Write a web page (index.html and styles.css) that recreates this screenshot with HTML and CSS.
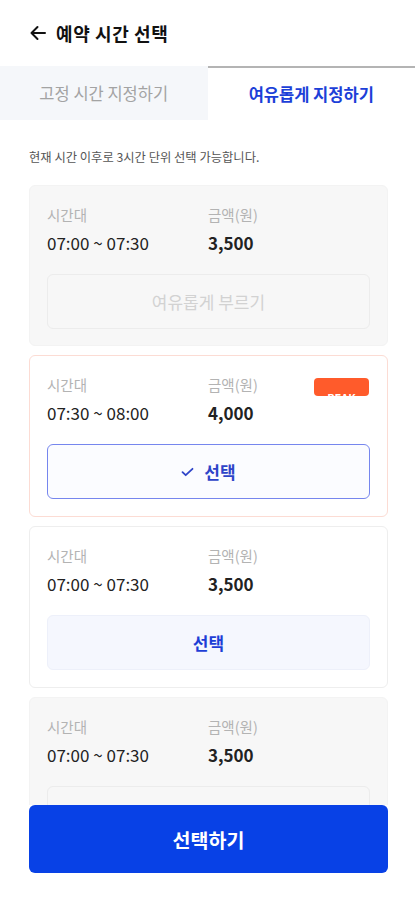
FILE: index.html
```html
<html>
  <head>
    <meta charset="utf-8">
    <link rel="stylesheet" href="styles.css">
    <title>예약 시간 선택</title>
  </head>
  <body>
    <div class="page">
      <header class="topbar">
        <svg class="back" width="18" height="18" viewBox="0 0 18 18">
          <path d="M16 9H2.5M8.5 3L2.5 9l6 6" fill="none" stroke="#111" stroke-width="2" stroke-linecap="round" stroke-linejoin="round"/>
        </svg>
        <h1>예약 시간 선택</h1>
      </header>

      <nav class="tabs">
        <div class="tab">고정 시간 지정하기</div>
        <div class="tab active">여유롭게 지정하기</div>
      </nav>

      <div class="list">
        <p class="notice">현재 시간 이후로 3시간 단위 선택 가능합니다.</p>

        <div class="slot disabled">
          <div class="row">
            <div class="col time">
              <span class="label">시간대</span>
              <span class="value">07:00 ~ 07:30</span>
            </div>
            <div class="col">
              <span class="label">금액(원)</span>
              <span class="value price">3,500</span>
            </div>
          </div>
          <button class="pick off">여유롭게 부르기</button>
        </div>

        <div class="slot peak">
          <span class="badge">PEAK</span>
          <div class="row">
            <div class="col time">
              <span class="label">시간대</span>
              <span class="value">07:30 ~ 08:00</span>
            </div>
            <div class="col">
              <span class="label">금액(원)</span>
              <span class="value price">4,000</span>
            </div>
          </div>
          <button class="pick chosen">
            <svg width="13" height="10" viewBox="0 0 13 10"><path d="M1.5 5.2l3.2 3L11.5 1.8" fill="none" stroke="#2e44c8" stroke-width="1.8" stroke-linecap="round" stroke-linejoin="round"/></svg>
            선택
          </button>
        </div>

        <div class="slot">
          <div class="row">
            <div class="col time">
              <span class="label">시간대</span>
              <span class="value">07:00 ~ 07:30</span>
            </div>
            <div class="col">
              <span class="label">금액(원)</span>
              <span class="value price">3,500</span>
            </div>
          </div>
          <button class="pick">선택</button>
        </div>

        <div class="slot disabled">
          <div class="row">
            <div class="col time">
              <span class="label">시간대</span>
              <span class="value">07:00 ~ 07:30</span>
            </div>
            <div class="col">
              <span class="label">금액(원)</span>
              <span class="value price">3,500</span>
            </div>
          </div>
          <button class="pick off">여유롭게 부르기</button>
        </div>
      </div>

      <footer class="bottom">
        <button class="submit">선택하기</button>
      </footer>
    </div>
  </body>
</html>
```

FILE: styles.css
```css
body {
  margin: 0;
  font-family: "Noto Sans CJK KR", "Noto Sans", sans-serif;
  color: #222;
  background: #fff;
}

.page {
  display: flex;
  flex-direction: column;
  height: 100vh;
}

.topbar {
  height: 66px;
  flex-shrink: 0;
  display: flex;
  align-items: center;
  padding-left: 29px;
  gap: 9px;
}
.topbar h1 {
  margin: 0;
  font-size: 18px;
  letter-spacing: 0.6px;
  font-weight: 700;
  color: #111;
}

.tabs {
  display: flex;
  height: 54px;
  flex-shrink: 0;
}
.tab {
  flex: 1;
  display: flex;
  align-items: center;
  justify-content: center;
  font-size: 16.5px;
  color: #a3a3a3;
  background: #f5f7fa;
}
.tab.active {
  background: #fff;
  color: #1c3fd8;
  font-weight: 700;
  border-top: 2px solid #b4b4b4;
}

.list {
  flex: 1;
  overflow: hidden;
  padding: 0 27px 0 29px;
}

.notice {
  margin: 29px 0 19px;
  font-size: 12.3px;
  color: #555;
  line-height: 17px;
}

.slot {
  position: relative;
  margin-bottom: 9px;
  padding: 19px 17px 17px;
  border: 1px solid #eeeeee;
  border-radius: 6px;
  background: #fff;
}
.slot.disabled {
  padding-bottom: 16px;
  background: #f7f7f7;
  border-color: #f3f3f3;
}
.slot.peak {
  border-color: #fcdcd4;
}

.row {
  display: flex;
}
.col {
  display: flex;
  flex-direction: column;
  gap: 6px;
}
.col.time {
  width: 161px;
}
.label {
  font-size: 14.5px;
  line-height: 20px;
  color: #b3b3b3;
}
.value {
  font-size: 17px;
  line-height: 23px;
  color: #222;
}
.value.price {
  font-weight: 700;
}

.badge {
  position: absolute;
  top: 22px;
  right: 18px;
  width: 55px;
  height: 18px;
  border-radius: 4px;
  background: #ff5b2b;
  color: #fff;
  font-size: 11px;
  font-weight: 700;
  text-align: center;
  line-height: 40px;
  overflow: hidden;
}

.pick {
  display: flex;
  align-items: center;
  justify-content: center;
  gap: 10px;
  width: 100%;
  height: 55px;
  margin-top: 20px;
  border: 1px solid #edf0fa;
  border-radius: 6px;
  background: #f5f7fe;
  font-family: inherit;
  font-size: 17px;
  font-weight: 700;
  color: #1d3ed6;
}
.pick.off {
  background: #f7f7f7;
  border-color: #ececec;
  color: #d2d2d2;
  font-weight: 400;
}
.pick.chosen {
  background: #fbfcff;
  border: 1.5px solid #7686ee;
  color: #2e44c8;
}

.bottom {
  flex-shrink: 0;
  padding: 0 27px 27px 29px;
  background: #fff;
}
.submit {
  display: block;
  width: 100%;
  height: 68px;
  border: 0;
  border-radius: 6px;
  background: #0841e6;
  color: #fff;
  font-family: inherit;
  font-size: 19.5px;
  font-weight: 700;
}
```
